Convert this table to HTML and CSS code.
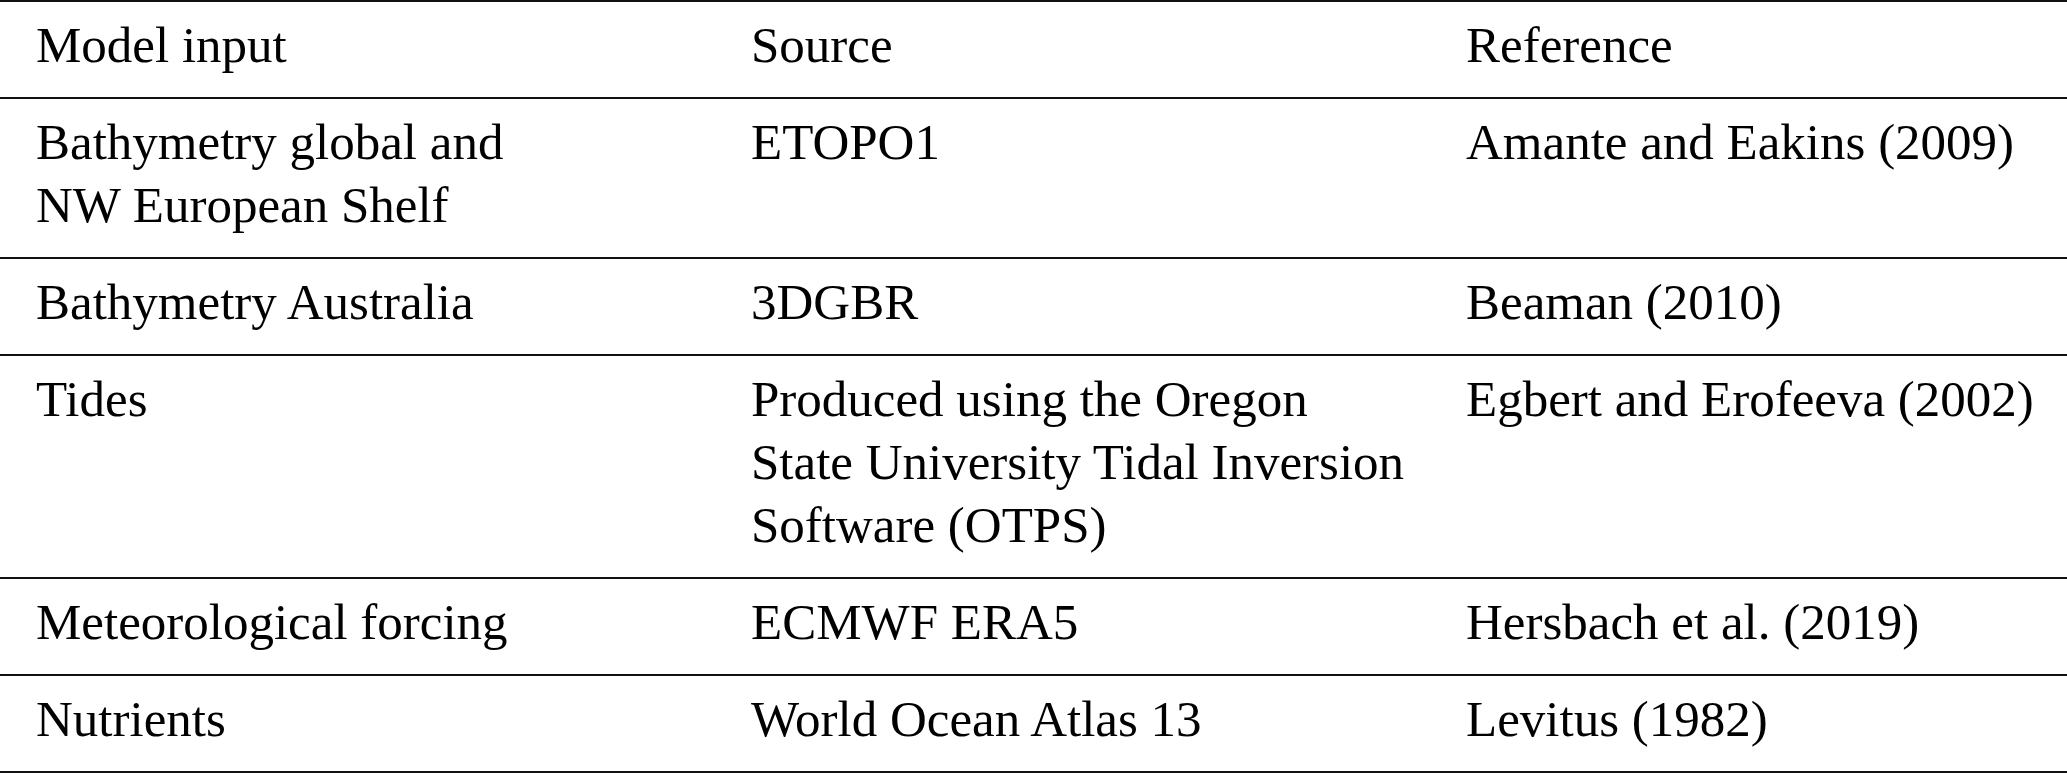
FILE: index.html
```html
<!DOCTYPE html>
<html lang="en">
<head>
<meta charset="utf-8">
<title>Model inputs</title>
<link rel="stylesheet" href="styles.css">
</head>
<body>
<table class="inputs">
  <colgroup>
    <col class="c1">
    <col class="c2">
    <col class="c3">
  </colgroup>
  <thead>
    <tr class="head">
      <th class="first">Model input</th>
      <th>Source</th>
      <th>Reference</th>
    </tr>
  </thead>
  <tbody>
    <tr>
      <td class="first">Bathymetry global and NW European Shelf</td>
      <td>ETOPO1</td>
      <td>Amante and Eakins (2009)</td>
    </tr>
    <tr>
      <td class="first">Bathymetry Australia</td>
      <td>3DGBR</td>
      <td>Beaman (2010)</td>
    </tr>
    <tr>
      <td class="first">Tides</td>
      <td>Produced using the Oregon State University Tidal Inversion Software (OTPS)</td>
      <td>Egbert and Erofeeva (2002)</td>
    </tr>
    <tr>
      <td class="first">Meteorological forcing</td>
      <td>ECMWF ERA5</td>
      <td>Hersbach et al. (2019)</td>
    </tr>
    <tr>
      <td class="first">Nutrients</td>
      <td>World Ocean Atlas 13</td>
      <td>Levitus (1982)</td>
    </tr>
  </tbody>
</table>
</body>
</html>
```
FILE: styles.css
```css
html, body {
  margin: 0;
  padding: 0;
  background: #ffffff;
}

.inputs {
  width: 2067px;
  table-layout: fixed;
  border-collapse: collapse;
  border-top: 2px solid #111111;
  font-family: "Liberation Serif", "Times New Roman", serif;
  font-size: 51px;
  line-height: 63px;
  color: #000000;
}

.c1 { width: 715px; }
.c2 { width: 715px; }
.c3 { width: 637px; }

.inputs tr {
  border-bottom: 2px solid #111111;
}

.inputs th,
.inputs td {
  font-weight: normal;
  text-align: left;
  vertical-align: top;
  padding: 12px 24px 20px 36px;
}

.inputs .first {
  padding-right: 170px;
}

.inputs .head th {
  padding-top: 12px;
  padding-bottom: 20px;
}
```
